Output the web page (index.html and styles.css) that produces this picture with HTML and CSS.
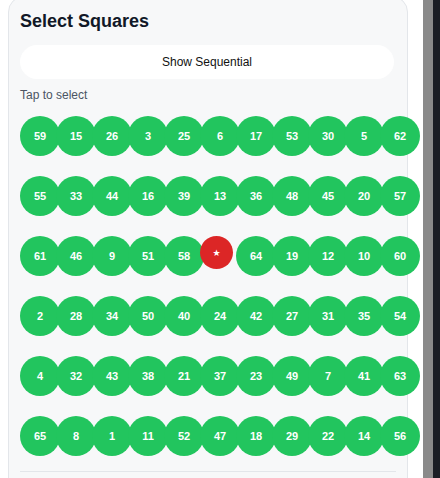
FILE: index.html
```html
<!DOCTYPE html>
<html>
<head>
<meta charset="utf-8">
<link rel="stylesheet" href="styles.css">
</head>
<body>
<div class="page">
  <div class="main">
    <div class="card">
      <h1 class="title">Select Squares</h1>
      <button class="seq-btn">Show Sequential</button>
      <p class="hint">Tap to select</p>
      <div class="grid">
        <div class="ball">59</div><div class="ball">15</div><div class="ball">26</div><div class="ball">3</div><div class="ball">25</div><div class="ball">6</div><div class="ball">17</div><div class="ball">53</div><div class="ball">30</div><div class="ball">5</div><div class="ball">62</div>
        <div class="ball">55</div><div class="ball">33</div><div class="ball">44</div><div class="ball">16</div><div class="ball">39</div><div class="ball">13</div><div class="ball">36</div><div class="ball">48</div><div class="ball">45</div><div class="ball">20</div><div class="ball">57</div>
        <div class="ball">61</div><div class="ball">46</div><div class="ball">9</div><div class="ball">51</div><div class="ball">58</div><div class="ball selected">★</div><div class="ball">64</div><div class="ball">19</div><div class="ball">12</div><div class="ball">10</div><div class="ball">60</div>
        <div class="ball">2</div><div class="ball">28</div><div class="ball">34</div><div class="ball">50</div><div class="ball">40</div><div class="ball">24</div><div class="ball">42</div><div class="ball">27</div><div class="ball">31</div><div class="ball">35</div><div class="ball">54</div>
        <div class="ball">4</div><div class="ball">32</div><div class="ball">43</div><div class="ball">38</div><div class="ball">21</div><div class="ball">37</div><div class="ball">23</div><div class="ball">49</div><div class="ball">7</div><div class="ball">41</div><div class="ball">63</div>
        <div class="ball">65</div><div class="ball">8</div><div class="ball">1</div><div class="ball">11</div><div class="ball">52</div><div class="ball">47</div><div class="ball">18</div><div class="ball">29</div><div class="ball">22</div><div class="ball">14</div><div class="ball">56</div>
      </div>
      <div class="divider"></div>
    </div>
  </div>
  <div class="scroll-track"></div>
  <div class="edge"></div>
</div>
</body>
</html>
```
FILE: styles.css
```css
html, body {
  margin: 0;
  padding: 0;
  height: 100%;
  overflow: hidden;
  background: #ffffff;
  font-family: "Liberation Sans", Arial, sans-serif;
}

.page {
  display: flex;
  height: 478px;
}

.main {
  flex: 1;
  padding-left: 8px;
  overflow: hidden;
}

.card {
  box-sizing: border-box;
  width: 400px;
  margin-top: -4px;
  padding: 13px 11px 40px;
  background: #f7f8f9;
  border: 1px solid #e3e6ea;
  border-radius: 16px;
}

.title {
  margin: 0;
  font-size: 18px;
  line-height: 22px;
  font-weight: 700;
  color: #111827;
}

.seq-btn {
  display: block;
  width: 374px;
  height: 34px;
  margin-top: 13px;
  border: none;
  border-radius: 17px;
  background: #ffffff;
  font-family: "Liberation Sans", Arial, sans-serif;
  font-size: 12px;
  color: #111111;
  padding: 0;
}

.hint {
  margin: 8px 0 0;
  font-size: 12px;
  line-height: 16px;
  color: #4b5563;
}

.grid {
  display: grid;
  grid-template-columns: repeat(11, 36px);
  grid-auto-rows: 40px;
  row-gap: 20px;
  margin-top: 13px;
}

.ball {
  width: 40px;
  height: 40px;
  border-radius: 50%;
  background: #22c55e;
  color: #ffffff;
  font-size: 11px;
  font-weight: 700;
  display: flex;
  align-items: center;
  justify-content: center;
}

.ball.selected {
  width: 33px;
  height: 33px;
  background: #dc2626;
  font-family: "DejaVu Sans", sans-serif;
  font-size: 9px;
  font-weight: 400;
}

.divider {
  margin-top: 15px;
  height: 1px;
  background: #e3e6ea;
}

.scroll-track {
  width: 10px;
  background: #8a8a8a;
}

.edge {
  width: 7px;
  background: #1b1e25;
}
```
